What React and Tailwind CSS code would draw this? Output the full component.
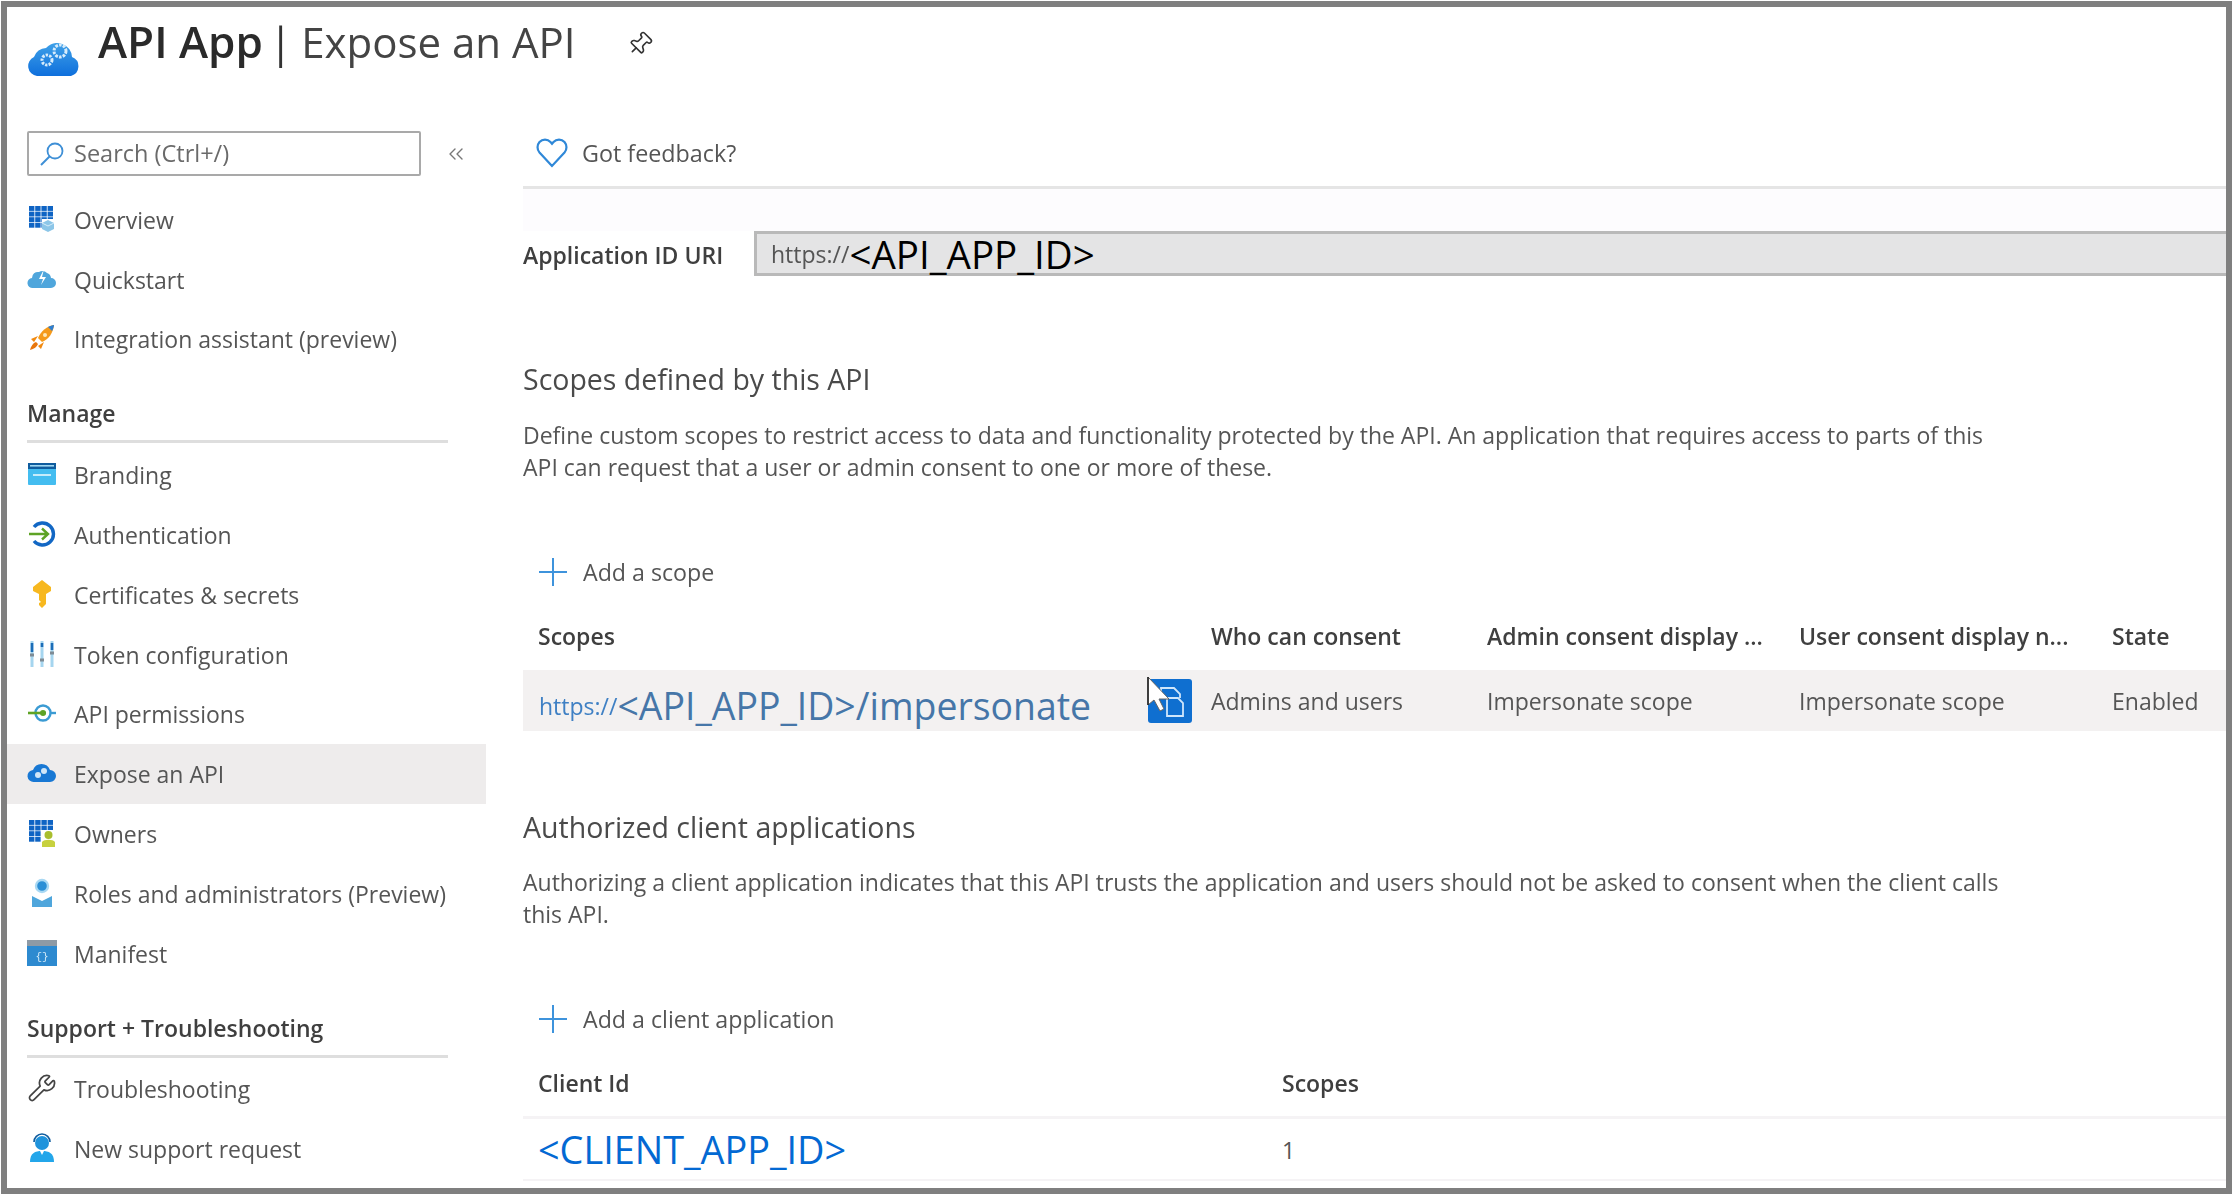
import React from "react";
import { Pin, ChevronsLeft, Wrench } from "lucide-react";

const Grid = ({ badge }) => (
  <svg width="28" height="28" viewBox="0 0 28 28">
    {[0,1,2,3].map(r=>[0,1,2,3].map(c=>(<rect key={r+"-"+c} x={1+c*6.2} y={1+r*5.6} width="5.4" height="4.9" fill="#0f64c4" />)))}
    {badge==="owner" ? (<g><rect x="13" y="11" width="15" height="17" fill="#fff"/><circle cx="20.5" cy="16" r="4" fill="#a9be2e"/><path d="M14 28v-5c2-3 11-3 13 0v5z" fill="#c7d13f"/></g>) : (<g><rect x="14" y="14" width="14" height="14" fill="#fff"/><path d="M20 15l6 3v6l-6 3-6-3v-6z" fill="#8cc6e8"/><path d="M14 18l6 3 6-3" fill="none" stroke="#d6ecf8" strokeWidth="1"/></g>)}
  </svg>
);
const CloudBolt = () => (
  <svg width="30" height="24" viewBox="0 0 30 24"><path d="M6 21a5 5 0 0 1-1-10 6 6 0 0 1 7-6 6 6 0 0 1 8 1 6 6 0 0 1 4 5 5 5 0 0 1 0 10z" fill="#4fa6dc"/><path d="M17 2l-5 10h4l-2 6 5-8h-4z" fill="#fff"/></svg>
);
const Rocket = () => (
  <svg width="30" height="30" viewBox="0 0 30 30"><path d="M27 2c-7 1-13 6-16 13l4 4c7-3 11-9 12-17z" fill="#f59a1b"/><path d="M27 2c-2 0-4 1-6 2l4 4c1-2 2-4 2-6z" fill="#2f7fd1"/><circle cx="18" cy="12" r="2" fill="#fde7b8"/><path d="M11 13l-7 3 3 3zM17 19l-3 7-3-3z" fill="#f28a10"/><path d="M9 19c-3 1-5 4-6 8 4-1 7-3 8-6z" fill="#e8760c"/></svg>
);
const Branding = () => (
  <svg width="28" height="24" viewBox="0 0 28 24"><rect y="1" width="28" height="22" rx="1" fill="#44bdf0"/><rect y="1" width="28" height="6" fill="#0f5c9e"/><rect x="2" y="3" width="24" height="1.6" fill="#9fd7f2"/><rect x="5" y="12" width="18" height="2" fill="#c6ecfb"/></svg>
);
const Auth = () => (
  <svg width="28" height="28" viewBox="0 0 28 28"><path d="M6 7a11 11 0 1 1 0 14" fill="none" stroke="#1267c4" strokeWidth="3.4"/><path d="M1 14h18M14 8.5l6 5.5-6 5.5" fill="none" stroke="#5ea325" strokeWidth="2.4"/></svg>
);
const Key = () => (
  <svg width="22" height="30" viewBox="0 0 22 30"><path d="M11 1l9 7v4l-5 3v10l-4 4-3-3v-2l2-1-2-2v-6l-6-3V8z" fill="#f7b81f"/></svg>
);
const Sliders = () => (
  <svg width="26" height="28" viewBox="0 0 26 28"><g stroke="#a5d5ef" strokeWidth="3"><path d="M3 1v26M13 1v26M23 1v26"/></g><g stroke="#1b6db8" strokeWidth="2.6"><path d="M3 3v9M13 3v4M23 3v7"/></g><g stroke="#7f8b94" strokeWidth="3"><path d="M1 15h4M11 20h4M21 13h4"/></g></svg>
);
const ApiPerm = () => (
  <svg width="28" height="20" viewBox="0 0 28 20"><circle cx="15" cy="10" r="7.5" fill="none" stroke="#3b9bd3" strokeWidth="2.4"/><path d="M0 10h18" stroke="#5ea325" strokeWidth="2.6"/><path d="M22 10h6" stroke="#3b9bd3" strokeWidth="2.4"/><circle cx="15" cy="10" r="3" fill="#5ea325"/></svg>
);
const CloudSmall = () => (
  <svg width="30" height="24" viewBox="0 0 30 24"><path d="M7 21a6 6 0 0 1-1-12 9 9 0 0 1 17 0 6 6 0 0 1 0 12z" fill="#1878d4"/><circle cx="11" cy="14" r="3" fill="#cfe6f8"/><circle cx="17" cy="10" r="3" fill="#cfe6f8"/></svg>
);
const Roles = () => (
  <svg width="22" height="30" viewBox="0 0 22 30"><circle cx="11" cy="8" r="6" fill="#2b8fd6" stroke="#a8d8f3" strokeWidth="2.4"/><path d="M1 18l10 5 10-5v11H1z" fill="#4fa6dc"/></svg>
);
const Manifest = () => (
  <svg width="30" height="26" viewBox="0 0 30 26"><rect width="30" height="26" fill="#2d8ad0"/><rect width="30" height="6" fill="#8e9aa5"/><text x="15" y="20" textAnchor="middle" fontSize="11" fill="#cfe8f8" fontFamily="Liberation Mono, monospace">{"{}"}</text></svg>
);
const Support = () => (
  <svg width="26" height="30" viewBox="0 0 26 30"><circle cx="13" cy="10" r="7" fill="#1f93dc"/><path d="M5 9a8 8 0 0 1 16 0" fill="none" stroke="#0f5c9e" strokeWidth="1.6"/><path d="M1 29c0-9 5-11 12-11s12 2 12 11z" fill="#23a6ea"/><path d="M11 18h4l-2 4z" fill="#fff"/></svg>
);
const AppCloud = () => (
  <svg width="54" height="42" viewBox="0 0 54 42">
    <defs><linearGradient id="g1" x1="0" x2="0" y1="0" y2="1"><stop offset="0" stopColor="#3ea0e8"/><stop offset="1" stopColor="#0f6fdc"/></linearGradient></defs>
    <path d="M10 41a10 10 0 0 1-3-19 13 13 0 0 1 12-9 15 15 0 0 1 26 9 10 10 0 0 1-1 19z" fill="url(#g1)"/>
    <circle cx="20" cy="25" r="5" fill="none" stroke="#d7ecfb" strokeWidth="3" strokeDasharray="2.4 1.2"/>
    <circle cx="33" cy="16" r="6" fill="none" stroke="#d7ecfb" strokeWidth="3" strokeDasharray="2.6 1.2"/>
  </svg>
);
const PlusIcon = () => (
  <svg width="30" height="30" viewBox="0 0 30 30" className="shrink-0"><path d="M15 1v28M1 15h28" stroke="#3e93dc" strokeWidth="2" /></svg>
);
const HeartIcon = () => (
  <svg width="32" height="30" viewBox="0 0 32 30" className="shrink-0"><path d="M16 28L3.5 14.5a8 8 0 0 1 0-10.5 7.5 7.5 0 0 1 11 0L16 5.8 17.5 4a7.5 7.5 0 0 1 11 0 8 8 0 0 1 0 10.5z" fill="none" stroke="#2f88d8" strokeWidth="2.2" /></svg>
);

const NavRow = ({ icon, label, active }) => (
  <div className={"flex h-[59.8px] items-center pl-[20px] " + (active ? "bg-[#eeecec]" : "")}>
    <span className="flex w-[47px] -translate-y-px items-center blur-[0.4px]"><span className="flex w-[30px] justify-center">{icon}</span></span>
    <span className="text-[#555555] blur-[0.5px]">{label}</span>
  </div>
);
const NavHead = ({ label }) => (
  <div className="ml-[20px] flex h-[76px] w-[421px] flex-col justify-end">
    <span className="mb-[12px] font-semibold text-[#3f3f3f] blur-[0.5px]">{label}</span>
    <div className="mb-[2px] h-[3px] bg-[#dedede]" />
  </div>
);
const Action = ({ label, cls }) => (
  <div className={"flex items-center gap-[15px] pl-[15px] " + cls}>
    <PlusIcon />
    <span className="text-[23.2px] text-[#555555] blur-[0.5px]">{label}</span>
  </div>
);

export default function App() {
  return (
    <div className="h-[1201px] w-[2233px] overflow-hidden bg-white p-px" style={{ fontFamily: '"Open Sans", "Noto Sans", sans-serif' }}>
      <div className="h-[1193px] w-[2231px] overflow-hidden border-[6px] border-[#7f7f7f] text-[23px] leading-[30px]">
        <header className="flex h-[101px] items-start pl-[20px]">
          <span className="mt-[28px] blur-[0.4px]"><AppCloud /></span>
          <h1 className="mt-[8px] ml-[17px] flex items-baseline text-[42.5px] leading-[52px] text-[#444444] blur-[0.3px]">
            <span className="text-[44px] font-semibold text-[#2a2a2a]">API App</span>
            <span className="ml-[6px] text-[#333333]">|</span>
            <span className="ml-[9px] text-[42px]">Expose an API</span>
          </h1>
          <Pin size={26} strokeWidth={1.5} className="mt-[24px] ml-[51px] rotate-45 text-[#333333]" />
        </header>
        <div className="flex">
          <aside className="w-[479px] shrink-0">
            <div className="mt-[23px] mb-[14px] flex items-center pl-[20px]">
              <div className="flex h-[45px] w-[394px] items-center rounded-[2px] border-[2px] border-[#a9a9a9] pl-[10px]">
                <svg width="26" height="26" viewBox="0 0 26 26" className="shrink-0"><circle cx="16" cy="10" r="7.5" fill="none" stroke="#3e8fd6" strokeWidth="1.8"/><path d="M10.5 15.5L2 24" stroke="#3e8fd6" strokeWidth="2"/></svg>
                <span className="ml-[9px] -translate-y-px text-[23.5px] text-[#6a6a6a] blur-[0.5px]">Search (Ctrl+/)</span>
              </div>
              <ChevronsLeft size={24} strokeWidth={1.4} className="ml-[23px] text-[#777777]" />
            </div>
            <NavRow icon={<Grid />} label="Overview" />
            <NavRow icon={<CloudBolt />} label="Quickstart" />
            <NavRow icon={<Rocket />} label="Integration assistant (preview)" />
            <NavHead label="Manage" />
            <NavRow icon={<Branding />} label="Branding" />
            <NavRow icon={<Auth />} label="Authentication" />
            <NavRow icon={<Key />} label="Certificates & secrets" />
            <NavRow icon={<Sliders />} label="Token configuration" />
            <NavRow icon={<ApiPerm />} label="API permissions" />
            <NavRow icon={<CloudSmall />} label="Expose an API" active />
            <NavRow icon={<Grid badge="owner" />} label="Owners" />
            <NavRow icon={<Roles />} label="Roles and administrators (Preview)" />
            <NavRow icon={<Manifest />} label="Manifest" />
            <NavHead label="Support + Troubleshooting" />
            <NavRow icon={<Wrench size={32} strokeWidth={1.4} className="text-[#444444]" />} label="Troubleshooting" />
            <NavRow icon={<Support />} label="New support request" />
          </aside>
          <main className="ml-[37px] min-w-0 flex-1">
            <div className="mt-[23px] h-[58px] border-b-[3px] border-[#e5e5e5] pl-[13px]">
              <span className="flex h-[43px] items-center gap-[14px]">
                <HeartIcon />
                <span className="text-[23.3px] text-[#555555] blur-[0.5px]">Got feedback?</span>
              </span>
            </div>
            <div className="h-[42px] bg-[#fdfcfe]" />
            <div className="flex h-[45px] items-center">
              <span className="w-[231px] pt-[2px] font-semibold text-[#3f3f3f] blur-[0.5px]">Application ID URI</span>
              <div className="flex h-full flex-1 items-center border-y-[3px] border-l-[3px] border-[#b9b9b9] bg-[#e4e4e5] pl-[14px]">
                <span className="text-[#555555] blur-[0.5px]">https://</span>
                <span className="text-[38.5px] leading-[40px] text-black">&lt;API_APP_ID&gt;</span>
              </div>
            </div>
            <h2 className="mt-[83px] text-[28.5px] leading-[40px] text-[#4a4a4a] blur-[0.5px]">Scopes defined by this API</h2>
            <p className="mt-[21px] w-[1480px] leading-[31.5px] text-[#555555] blur-[0.5px]">Define custom scopes to restrict access to data and functionality protected by the API. An application that requires access to parts of this API can request that a user or admin consent to one or more of these.</p>
            <Action label="Add a scope" cls="mt-[69px] h-[40px]" />
            <div className="mt-[24px] grid h-[40px] grid-cols-[673px_276px_312px_313px_1fr] items-center pl-[15px] font-semibold text-[#3f3f3f] blur-[0.5px]">
              <span>Scopes</span><span>Who can consent</span><span>Admin consent display ...</span><span>User consent display n...</span><span>State</span>
            </div>
            <div className="mt-[14px] grid h-[61px] grid-cols-[673px_276px_312px_313px_1fr] items-center bg-[#f3f1f1] pl-[15px] text-[#555555]">
              <span className="flex items-center justify-between pr-[19px]">
                <span className="ml-px flex items-baseline text-[#4676a8]">
                  <span className="text-[#3f80c4] blur-[0.5px]">https://</span>
                  <span className="translate-y-[5px] text-[37.4px] leading-[44px]">&lt;API_APP_ID&gt;/impersonate</span>
                </span>
                <span className="relative h-[44px] w-[44px] rounded-[3px] bg-[#0f6fd0] blur-[0.3px]">
                  <svg width="44" height="44" viewBox="0 0 44 44" className="absolute top-0 left-0">
                    <path d="M13 15V9h13l6 6v4" fill="none" stroke="#cfe6fb" strokeWidth="1.8"/>
                    <path d="M19 19h11l5 5v13H19z" fill="none" stroke="#cfe6fb" strokeWidth="1.8"/>
                  </svg>
                  <svg width="26" height="38" viewBox="0 0 26 38" className="absolute -top-[3px] -left-px">
                    <path d="M1 1v28l6-5 6 11 4-2-5-10h10z" fill="#fff" stroke="#666666" strokeWidth="1"/>
                    <path d="M1 1v28" stroke="#222222" strokeWidth="1.6"/>
                  </svg>
                </span>
              </span>
              <span className="blur-[0.5px]">Admins and users</span>
              <span className="blur-[0.5px]">Impersonate scope</span>
              <span className="blur-[0.5px]">Impersonate scope</span>
              <span className="blur-[0.5px]">Enabled</span>
            </div>
            <h2 className="mt-[76px] text-[28.5px] leading-[40px] text-[#4a4a4a] blur-[0.5px]">Authorized client applications</h2>
            <p className="mt-[19px] w-[1500px] leading-[32px] text-[#555555] blur-[0.5px]">Authorizing a client application indicates that this API trusts the application and users should not be asked to consent when the client calls this API.</p>
            <Action label="Add a client application" cls="mt-[69px] h-[40px]" />
            <div className="mt-[27px] h-[53px] border-b-[3px] border-[#f5f3f5] pb-[17px] pl-[15px] font-semibold text-[#3f3f3f]">
              <div className="flex h-full items-center">
                <span className="w-[744px] blur-[0.5px]">Client Id</span><span className="blur-[0.5px]">Scopes</span>
              </div>
            </div>
            <div className="flex h-[62px] items-center border-b-[2px] border-[#f5f3f5] pt-[2px] pl-[15px] text-[#555555]">
              <span className="w-[744px] text-[37.8px] leading-[44px] text-[#0369d3]">&lt;CLIENT_APP_ID&gt;</span>
              <span>1</span>
            </div>
          </main>
        </div>
      </div>
    </div>
  );
}
